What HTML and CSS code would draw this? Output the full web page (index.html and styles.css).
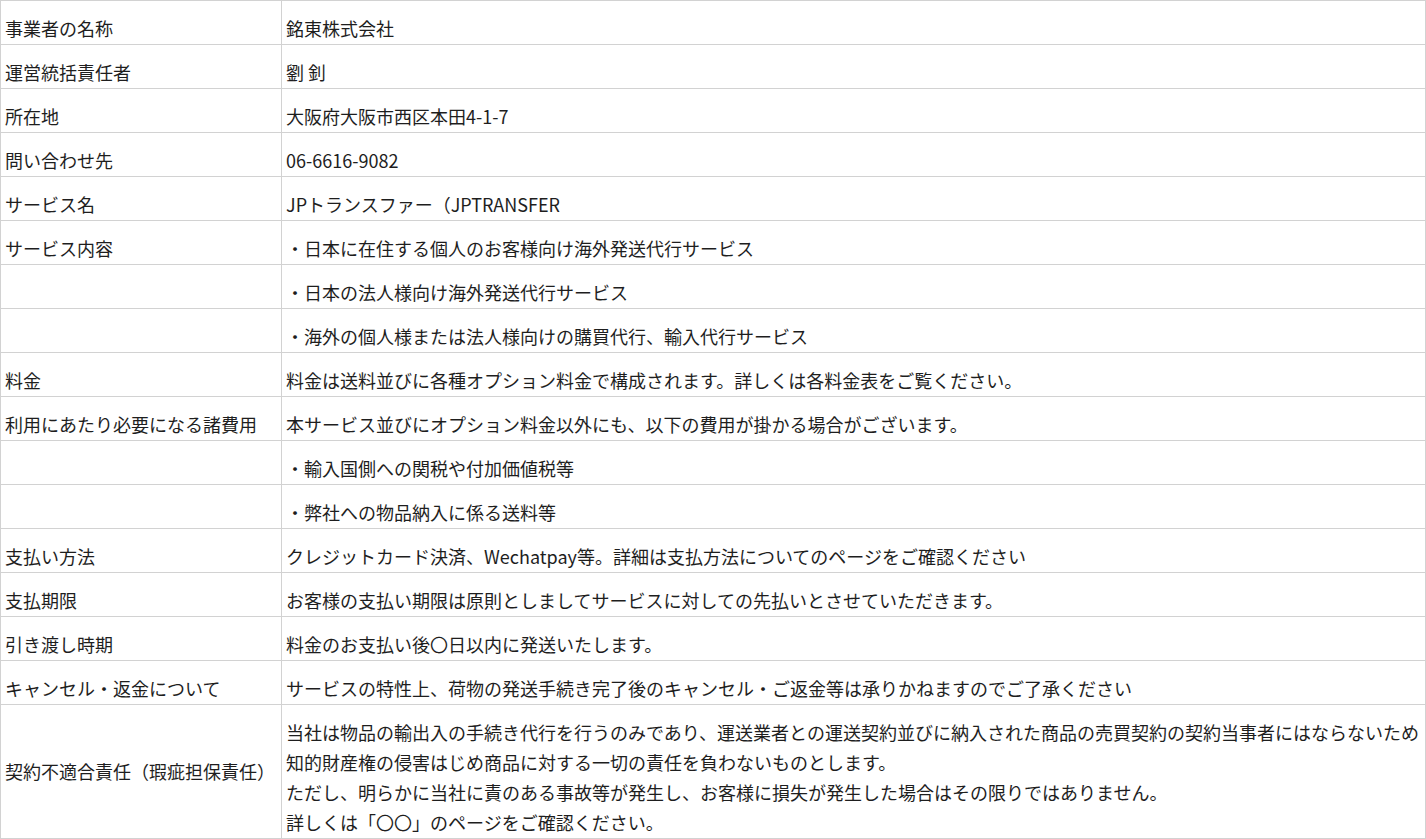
FILE: index.html
```html
<!DOCTYPE html>
<html lang="ja">
<head>
<meta charset="utf-8">
<title>特定商取引法に基づく表記</title>
<link rel="stylesheet" href="styles.css">
</head>
<body>
<table class="info">
  <colgroup><col class="col-label"><col class="col-value"></colgroup>
  <tbody>
    <tr><td>事業者の名称</td><td>銘東株式会社</td></tr>
    <tr><td>運営統括責任者</td><td>劉 釗</td></tr>
    <tr><td>所在地</td><td>大阪府大阪市西区本田4-1-7</td></tr>
    <tr><td>問い合わせ先</td><td>06-6616-9082</td></tr>
    <tr><td>サービス名</td><td>JPトランスファー（JPTRANSFER</td></tr>
    <tr><td>サービス内容</td><td>・日本に在住する個人のお客様向け海外発送代行サービス</td></tr>
    <tr><td></td><td>・日本の法人様向け海外発送代行サービス</td></tr>
    <tr><td></td><td>・海外の個人様または法人様向けの購買代行、輸入代行サービス</td></tr>
    <tr><td>料金</td><td>料金は送料並びに各種オプション料金で構成されます。詳しくは各料金表をご覧ください。</td></tr>
    <tr><td>利用にあたり必要になる諸費用</td><td>本サービス並びにオプション料金以外にも、以下の費用が掛かる場合がございます。</td></tr>
    <tr><td></td><td>・輸入国側への関税や付加価値税等</td></tr>
    <tr><td></td><td>・弊社への物品納入に係る送料等</td></tr>
    <tr><td>支払い方法</td><td>クレジットカード決済、Wechatpay等。詳細は支払方法についてのページをご確認ください</td></tr>
    <tr><td>支払期限</td><td>お客様の支払い期限は原則としましてサービスに対しての先払いとさせていただきます。</td></tr>
    <tr><td>引き渡し時期</td><td>料金のお支払い後〇日以内に発送いたします。</td></tr>
    <tr><td>キャンセル・返金について</td><td>サービスの特性上、荷物の発送手続き完了後のキャンセル・ご返金等は承りかねますのでご了承ください</td></tr>
    <tr class="multi">
      <td class="mid">契約不適合責任（瑕疵担保責任）</td>
      <td>当社は物品の輸出入の手続き代行を行うのみであり、運送業者との運送契約並びに納入された商品の売買契約の契約当事者にはならないため<br>知的財産権の侵害はじめ商品に対する一切の責任を負わないものとします。<br>ただし、明らかに当社に責のある事故等が発生し、お客様に損失が発生した場合はその限りではありません。<br>詳しくは「〇〇」のページをご確認ください。</td>
    </tr>
  </tbody>
</table>
</body>
</html>
```

FILE: styles.css
```css
html, body {
  margin: 0;
  padding: 0;
  background: #ffffff;
}

body {
  font-family: "Noto Sans CJK JP", "Noto Sans", sans-serif;
  font-size: 18px;
  color: #1e1e1e;
}

.info {
  width: 1426px;
  border-collapse: collapse;
  table-layout: fixed;
}

.col-label {
  width: 281px;
}

.info td {
  border: 1px solid #d2d2d2;
  height: 42px;
  padding: 0 4px 1px 4px;
  line-height: 30px;
  vertical-align: bottom;
  white-space: nowrap;
  overflow: hidden;
}

.info .multi td {
  padding-top: 12px;
}

.info .multi td.mid {
  padding-top: 0;
  vertical-align: middle;
}
```
